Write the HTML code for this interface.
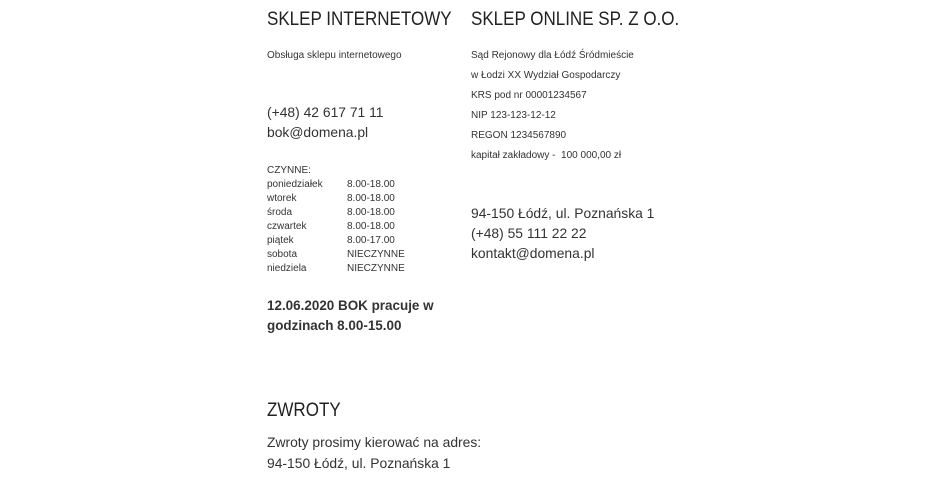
<!DOCTYPE html>
<html><head><meta charset="utf-8"><style>
body{margin:0;width:950px;height:490px;background:#fff;position:relative;overflow:hidden;font-family:"Liberation Sans",sans-serif;color:#333}
.a{position:absolute;white-space:nowrap;transform-origin:0 0}
.h{font-size:19px;line-height:19px;color:#222;transform:scaleX(.895)}
.s{font-size:10px;line-height:20px;transform:scaleX(1)}
.m{font-size:14px;line-height:20px;transform:scaleX(.99)}
.t{font-size:10px;line-height:14px;transform:scaleX(1)}
.t td{padding:0;height:14px}
.b{font-size:14px;line-height:20px;font-weight:bold;transform:scaleX(.96)}
</style></head><body>
<div class="a h" style="left:267px;top:10px">SKLEP INTERNETOWY</div>
<div class="a h" style="left:471px;top:10px">SKLEP ONLINE SP. Z O.O.</div>
<div class="a s" style="left:267px;top:46px">Obsługa sklepu internetowego</div>
<div class="a m" style="left:267px;top:102px">(+48) 42 617 71 11<br>bok@domena.pl</div>
<div class="a t" style="left:267px;top:164px">
<div>CZYNNE:</div>
<table cellspacing="0" style="font-size:10px;border-collapse:collapse;color:#333">
<tr><td style="width:80px">poniedziałek</td><td>8.00-18.00</td></tr>
<tr><td>wtorek</td><td>8.00-18.00</td></tr>
<tr><td>środa</td><td>8.00-18.00</td></tr>
<tr><td>czwartek</td><td>8.00-18.00</td></tr>
<tr><td>piątek</td><td>8.00-17.00</td></tr>
<tr><td>sobota</td><td>NIECZYNNE</td></tr>
<tr><td>niedziela</td><td>NIECZYNNE</td></tr>
</table></div>
<div class="a b" style="left:267px;top:295px">12.06.2020 BOK pracuje w<br>godzinach 8.00-15.00</div>
<div class="a s" style="left:471px;top:46px">Sąd Rejonowy dla Łódź Śródmieście<br>w Łodzi XX Wydział Gospodarczy<br>KRS pod nr 00001234567<br>NIP 123-123-12-12<br>REGON 1234567890<br>kapitał zakładowy -&nbsp; 100 000,00 zł</div>
<div class="a m" style="left:471px;top:203px">94-150 Łódź, ul. Poznańska 1<br>(+48) 55 111 22 22<br>kontakt@domena.pl</div>
<div class="a h" style="left:267px;top:401px">ZWROTY</div>
<div class="a m" style="left:267px;top:432px;line-height:21px">Zwroty prosimy kierować na adres:<br>94-150 Łódź, ul. Poznańska 1</div>
</body></html>
